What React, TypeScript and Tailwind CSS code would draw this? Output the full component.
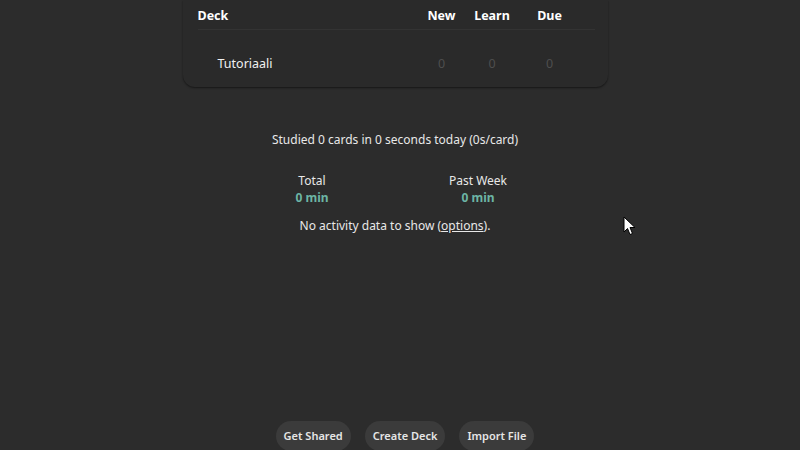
import React from 'react';

const decks = [{ name: 'Tutoriaali', newCount: 0, learn: 0, due: 0 }];

const Cursor: React.FC = () => (
    <svg className="absolute left-[623px] top-[216px]" width="14" height="20" viewBox="0 0 14 20">
        <path d="M1 1 L1 16 L4.5 12.5 L7 18.5 L9.5 17.5 L7 11.5 L12 11.5 Z" fill="#fff" stroke="#000" strokeWidth="1" strokeLinejoin="round" />
    </svg>
);

const App: React.FC = () => {
    return (
        <div className="relative w-[800px] h-[450px] overflow-hidden bg-[#2c2c2c] text-[#e8e8e8] font-['Noto_Sans','Open_Sans',sans-serif] text-[12px]">
            <div className="w-[790px] h-full flex flex-col items-center">
                {/* deck list */}
                <div className="w-[425px] bg-[#2a2a2a] rounded-b-[12px] shadow-[0_1px_2px_rgba(0,0,0,0.5)] pl-[15px] pr-[13px]">
                    <div className="flex h-[30px] pt-[8px] leading-[16px] border-b border-[#333333] font-bold text-white text-[12.5px]">
                        <div className="flex-1">Deck</div>
                        <div className="w-[42px] text-center">New</div>
                        <div className="w-[59px] text-center">Learn</div>
                        <div className="w-[56px] text-center">Due</div>
                        <div className="w-[17px]" />
                    </div>
                    {decks.map(d => (
                        <div key={d.name} className="flex pt-[26px] pb-[15px] leading-[16px] text-[12.5px]">
                            <div className="flex-1 pl-[20px] text-[#f0f0f0]">{d.name}</div>
                            <div className="w-[42px] text-center text-[#4e4e4e]">{d.newCount}</div>
                            <div className="w-[59px] text-center text-[#4e4e4e]">{d.learn}</div>
                            <div className="w-[56px] text-center text-[#4e4e4e]">{d.due}</div>
                            <div className="w-[17px]" />
                        </div>
                    ))}
                </div>

                {/* stats */}
                <div className="mt-[44px] text-center leading-[17px]">Studied 0 cards in 0 seconds today (0s/card)</div>
                <div className="mt-[24px] flex gap-[100px] text-center leading-[17px]">
                    <div className="w-[66px]">
                        <div>Total</div>
                        <div className="font-bold text-[#6cb5a5]">0 min</div>
                    </div>
                    <div className="w-[66px]">
                        <div>Past Week</div>
                        <div className="font-bold text-[#6cb5a5]">0 min</div>
                    </div>
                </div>
                <div className="mt-[11px] text-center leading-[17px]">
                    No activity data to show (<span className="underline">options</span>).
                </div>

                <div className="flex-1" />

                {/* bottom buttons */}
                <div className="flex gap-[14px] pl-[20px] translate-y-[1px]">
                    {['Get Shared', 'Create Deck', 'Import File'].map(b => (
                        <button key={b} className="h-[30px] px-[8px] rounded-full bg-[#3b3b3b] text-[11px] font-semibold text-[#e6e6e6]">
                            {b}
                        </button>
                    ))}
                </div>
            </div>
            <Cursor />
        </div>
    );
};

export default App;
